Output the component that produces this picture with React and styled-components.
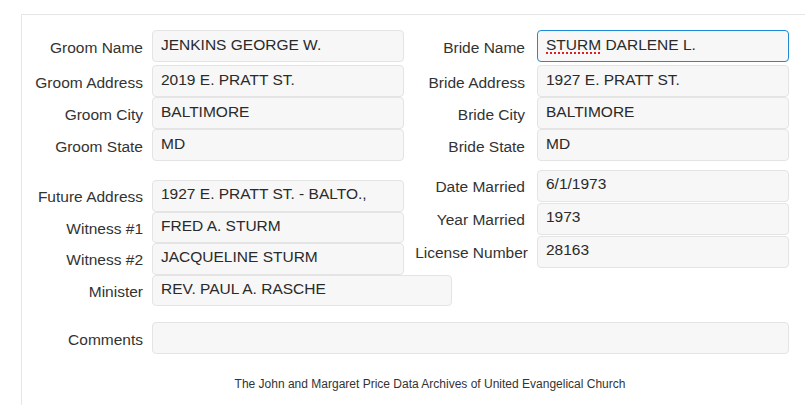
import React from "react";
import styled, { createGlobalStyle } from "styled-components";

const GlobalStyle = createGlobalStyle`
  html, body {
    margin: 0;
    padding: 0;
    background: #ffffff;
    overflow: hidden;
  }
  body {
    font-family: "Liberation Sans", Arial, sans-serif;
    color: #333333;
  }
`;

const Page = styled.div`
  padding: 14px 0 0 21px;
  width: 100vw;
  box-sizing: border-box;
  overflow: hidden;
`;

const Panel = styled.div`
  width: 840px;
  box-sizing: border-box;
  border-top: 1px solid #e6e6e6;
  border-left: 1px solid #e6e6e6;
  padding: 15px 0 20px 0;
`;

const Section = styled.div`
  display: flex;
  align-items: flex-start;
  margin-top: ${(p) => p.$mt || 0}px;
`;

const Column = styled.div`
  display: grid;
  flex: none;
  width: ${(p) => (p.$width ? `${p.$width}px` : "auto")};
  grid-template-columns: ${(p) => p.$labelW}px max-content;
  row-gap: ${(p) => p.$gap || 0}px;
  padding-top: ${(p) => p.$pt || 0}px;
  align-content: start;
`;

const Label = styled.div`
  align-self: center;
  text-align: right;
  white-space: nowrap;
  padding-right: ${(p) => p.$pr}px;
  padding-top: 3px;
  margin-bottom: ${(p) => p.$after || 0}px;
  font-size: 15.5px;
  color: #333333;
`;

const Field = styled.div`
  box-sizing: border-box;
  width: ${(p) => p.$w}px;
  height: ${(p) => p.$h || 32}px;
  margin-bottom: ${(p) => p.$after || 0}px;
  display: flex;
  align-items: center;
  padding: 0 8px 3px 8px;
  background: #f7f7f7;
  border: 1px solid ${(p) => (p.$focused ? "#1c8ad6" : "#e4e4e4")};
  border-radius: 4px;
  font-size: 15.5px;
  color: #2a2a2a;
  white-space: nowrap;
  overflow: hidden;
`;

const Misspelled = styled.span`
  text-decoration: underline dotted #e0201c;
  text-decoration-thickness: 2px;
  text-underline-offset: 3px;
`;

const Footer = styled.div`
  width: 816px;
  margin-top: 23px;
  text-align: center;
  font-size: 12px;
  color: #333333;
`;

const L = 130;
const R = 133;
const W = 252;

function Row({ label, value, pr, w = W, h, after, focused, children }) {
  return (
    <>
      <Label $pr={pr} $after={after}>{label}</Label>
      <Field $w={w} $h={h} $after={after} $focused={focused}>
        {children || value}
      </Field>
    </>
  );
}

export default function App() {
  return (
    <>
      <GlobalStyle />
      <Page>
        <Panel>
          <Section>
            <Column $labelW={L} $width={L + W}>
              <Row label="Groom Name" value="JENKINS GEORGE W." pr={9} after={3} />
              <Row label="Groom Address" value="2019 E. PRATT ST." pr={9} />
              <Row label="Groom City" value="BALTIMORE" pr={9} />
              <Row label="Groom State" value="MD" pr={9} />
            </Column>
            <Column $labelW={R} $width={R + W}>
              <Row label="Bride Name" pr={12} after={3} focused>
                <span>
                  <Misspelled>STURM</Misspelled> DARLENE L.
                </span>
              </Row>
              <Row label="Bride Address" value="1927 E. PRATT ST." pr={12} />
              <Row label="Bride City" value="BALTIMORE" pr={12} />
              <Row label="Bride State" value="MD" pr={12} />
            </Column>
          </Section>

          <Section>
            <Column $labelW={L} $width={L + W} $pt={19}>
              <Row label="Future Address" value="1927 E. PRATT ST. - BALTO.," pr={9} h={31.5} />
              <Row label="Witness #1" value="FRED A. STURM" pr={9} h={31.5} />
              <Row label="Witness #2" value="JACQUELINE STURM" pr={9} h={31.5} />
              <Row label="Minister" value="REV. PAUL A. RASCHE" pr={9} w={300} h={31.5} />
            </Column>
            <Column $labelW={R} $width={R + W} $pt={9} $gap={1.5}>
              <Row label="Date Married" value="6/1/1973" pr={12} h={31.5} />
              <Row label="Year Married" value="1973" pr={12} h={31.5} />
              <Row label="License Number" value="28163" pr={9} h={31.5} />
            </Column>
          </Section>

          <Section $mt={16}>
            <Column $labelW={L}>
              <Row label="Comments" value="" pr={9} w={637} />
            </Column>
          </Section>

          <Footer>The John and Margaret Price Data Archives of United Evangelical Church</Footer>
        </Panel>
      </Page>
    </>
  );
}
